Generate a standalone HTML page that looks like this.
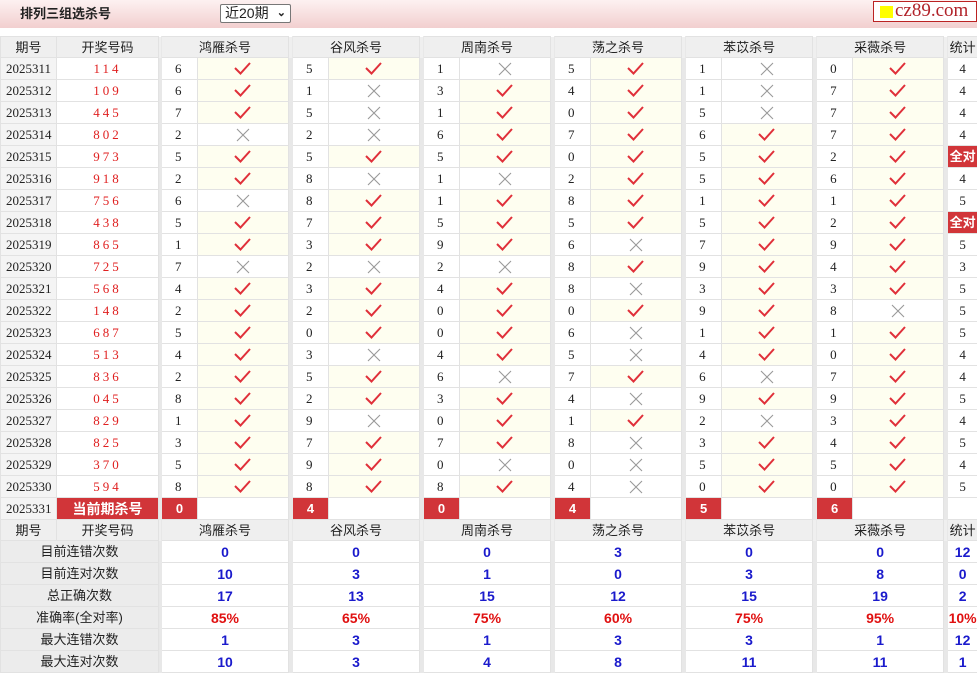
<!DOCTYPE html>
<html><head><meta charset="utf-8"><style>
*{margin:0;padding:0;box-sizing:border-box}
body{width:977px;height:671px;overflow:hidden;background:#fff;font-family:"Liberation Serif","Noto Serif CJK SC",serif;font-size:13px;color:#222;position:relative}
.top{position:absolute;left:0;top:0;width:977px;height:28px;background:linear-gradient(#fdf1f1,#f2cfcf)}
.title{position:absolute;left:20px;top:3px;font:bold 13px "Liberation Sans","Noto Sans CJK SC",sans-serif;color:#222}
.sel{position:absolute;left:220px;top:4px;width:71px;height:19px;border:1px solid #777;border-radius:2px;background:#fff;font:14px "Liberation Sans","Noto Sans CJK SC",sans-serif;padding-left:4px;line-height:16px}
.sel b{position:absolute;right:4px;top:0;font-size:11px}
.logo{position:absolute;left:873px;top:1px;width:104px;height:21px;border:1px solid #b22;background:#fff;font:19px "Liberation Serif",serif;color:#b1232a;line-height:18px;padding-left:21px;overflow:hidden;white-space:nowrap}
.logo i{position:absolute;left:6px;top:4px;width:13px;height:12px;background:#ff0}
table{position:absolute;left:0;top:36px;border-collapse:collapse;table-layout:fixed;width:977px}
td{height:22px;line-height:20px;border:1px solid #e2e2e2;text-align:center;padding:0;white-space:nowrap;overflow:hidden}
tr.h td{background:#efefef;font-family:"Liberation Sans","Noto Sans CJK SC",sans-serif;font-size:13px;height:21px;line-height:19px}
td.s{background:#e8e8e8;border-top:none;border-bottom:none;border-color:#e8e8e8}
td.p{text-align:left;padding-left:5px;background:#f4f4f4}
td.d{color:#e02020;letter-spacing:3px}
td.n{text-align:left;padding-left:13px}
td.c{background:#fefef0}
svg{display:block;margin:0 auto}
td.r,td.q{background:#d13539;color:#fff;font:bold 13px "Liberation Sans","Noto Sans CJK SC",sans-serif;line-height:20px}
td.lb{background:#ececec;font-family:"Liberation Sans","Noto Sans CJK SC",sans-serif;font-size:13px}
td.v{color:#1a1acc;font:bold 14px "Liberation Sans",sans-serif;line-height:20px}
td.v.red{color:#e01010}
</style></head><body>
<svg width="0" height="0" style="position:absolute"><defs>
<g id="k"><path d="M1 7 L6.5 12.5 L16 2" fill="none" stroke="#e0303a" stroke-width="2"/></g>
<g id="x"><path d="M3 2 L15 14 M15 2 L3 14" fill="none" stroke="#999" stroke-width="1.1"/></g>
</defs></svg>
<div class="top"></div>
<div class="title">排列三组选杀号</div>
<div class="sel">近20期<b>&#8964;</b></div>
<div class="logo"><i></i>cz89.com</div>
<table>
<colgroup><col style="width:56px"><col style="width:102px"><col style="width:3px">
<col style="width:36px"><col style="width:91px"><col style="width:4px">
<col style="width:36px"><col style="width:91px"><col style="width:4px">
<col style="width:36px"><col style="width:91px"><col style="width:4px">
<col style="width:36px"><col style="width:91px"><col style="width:4px">
<col style="width:36px"><col style="width:91px"><col style="width:4px">
<col style="width:36px"><col style="width:91px"><col style="width:4px">
<col style="width:30px"></colgroup>
<tr class="h"><td>期号</td><td>开奖号码</td><td class="s"></td><td colspan="2">鸿雁杀号</td><td class="s"></td><td colspan="2">谷风杀号</td><td class="s"></td><td colspan="2">周南杀号</td><td class="s"></td><td colspan="2">荡之杀号</td><td class="s"></td><td colspan="2">苯苡杀号</td><td class="s"></td><td colspan="2">采薇杀号</td><td class="s"></td><td>统计</td></tr>
<tr><td class="p">2025311</td><td class="d">114</td><td class="s"></td><td class="n">6</td><td class="c"><svg width="18" height="15"><use href="#k"/></svg></td><td class="s"></td><td class="n">5</td><td class="c"><svg width="18" height="15"><use href="#k"/></svg></td><td class="s"></td><td class="n">1</td><td><svg width="18" height="15"><use href="#x"/></svg></td><td class="s"></td><td class="n">5</td><td class="c"><svg width="18" height="15"><use href="#k"/></svg></td><td class="s"></td><td class="n">1</td><td><svg width="18" height="15"><use href="#x"/></svg></td><td class="s"></td><td class="n">0</td><td class="c"><svg width="18" height="15"><use href="#k"/></svg></td><td class="s"></td><td>4</td></tr>
<tr><td class="p">2025312</td><td class="d">109</td><td class="s"></td><td class="n">6</td><td class="c"><svg width="18" height="15"><use href="#k"/></svg></td><td class="s"></td><td class="n">1</td><td><svg width="18" height="15"><use href="#x"/></svg></td><td class="s"></td><td class="n">3</td><td class="c"><svg width="18" height="15"><use href="#k"/></svg></td><td class="s"></td><td class="n">4</td><td class="c"><svg width="18" height="15"><use href="#k"/></svg></td><td class="s"></td><td class="n">1</td><td><svg width="18" height="15"><use href="#x"/></svg></td><td class="s"></td><td class="n">7</td><td class="c"><svg width="18" height="15"><use href="#k"/></svg></td><td class="s"></td><td>4</td></tr>
<tr><td class="p">2025313</td><td class="d">445</td><td class="s"></td><td class="n">7</td><td class="c"><svg width="18" height="15"><use href="#k"/></svg></td><td class="s"></td><td class="n">5</td><td><svg width="18" height="15"><use href="#x"/></svg></td><td class="s"></td><td class="n">1</td><td class="c"><svg width="18" height="15"><use href="#k"/></svg></td><td class="s"></td><td class="n">0</td><td class="c"><svg width="18" height="15"><use href="#k"/></svg></td><td class="s"></td><td class="n">5</td><td><svg width="18" height="15"><use href="#x"/></svg></td><td class="s"></td><td class="n">7</td><td class="c"><svg width="18" height="15"><use href="#k"/></svg></td><td class="s"></td><td>4</td></tr>
<tr><td class="p">2025314</td><td class="d">802</td><td class="s"></td><td class="n">2</td><td><svg width="18" height="15"><use href="#x"/></svg></td><td class="s"></td><td class="n">2</td><td><svg width="18" height="15"><use href="#x"/></svg></td><td class="s"></td><td class="n">6</td><td class="c"><svg width="18" height="15"><use href="#k"/></svg></td><td class="s"></td><td class="n">7</td><td class="c"><svg width="18" height="15"><use href="#k"/></svg></td><td class="s"></td><td class="n">6</td><td class="c"><svg width="18" height="15"><use href="#k"/></svg></td><td class="s"></td><td class="n">7</td><td class="c"><svg width="18" height="15"><use href="#k"/></svg></td><td class="s"></td><td>4</td></tr>
<tr><td class="p">2025315</td><td class="d">973</td><td class="s"></td><td class="n">5</td><td class="c"><svg width="18" height="15"><use href="#k"/></svg></td><td class="s"></td><td class="n">5</td><td class="c"><svg width="18" height="15"><use href="#k"/></svg></td><td class="s"></td><td class="n">5</td><td class="c"><svg width="18" height="15"><use href="#k"/></svg></td><td class="s"></td><td class="n">0</td><td class="c"><svg width="18" height="15"><use href="#k"/></svg></td><td class="s"></td><td class="n">5</td><td class="c"><svg width="18" height="15"><use href="#k"/></svg></td><td class="s"></td><td class="n">2</td><td class="c"><svg width="18" height="15"><use href="#k"/></svg></td><td class="s"></td><td class="q">全对</td></tr>
<tr><td class="p">2025316</td><td class="d">918</td><td class="s"></td><td class="n">2</td><td class="c"><svg width="18" height="15"><use href="#k"/></svg></td><td class="s"></td><td class="n">8</td><td><svg width="18" height="15"><use href="#x"/></svg></td><td class="s"></td><td class="n">1</td><td><svg width="18" height="15"><use href="#x"/></svg></td><td class="s"></td><td class="n">2</td><td class="c"><svg width="18" height="15"><use href="#k"/></svg></td><td class="s"></td><td class="n">5</td><td class="c"><svg width="18" height="15"><use href="#k"/></svg></td><td class="s"></td><td class="n">6</td><td class="c"><svg width="18" height="15"><use href="#k"/></svg></td><td class="s"></td><td>4</td></tr>
<tr><td class="p">2025317</td><td class="d">756</td><td class="s"></td><td class="n">6</td><td><svg width="18" height="15"><use href="#x"/></svg></td><td class="s"></td><td class="n">8</td><td class="c"><svg width="18" height="15"><use href="#k"/></svg></td><td class="s"></td><td class="n">1</td><td class="c"><svg width="18" height="15"><use href="#k"/></svg></td><td class="s"></td><td class="n">8</td><td class="c"><svg width="18" height="15"><use href="#k"/></svg></td><td class="s"></td><td class="n">1</td><td class="c"><svg width="18" height="15"><use href="#k"/></svg></td><td class="s"></td><td class="n">1</td><td class="c"><svg width="18" height="15"><use href="#k"/></svg></td><td class="s"></td><td>5</td></tr>
<tr><td class="p">2025318</td><td class="d">438</td><td class="s"></td><td class="n">5</td><td class="c"><svg width="18" height="15"><use href="#k"/></svg></td><td class="s"></td><td class="n">7</td><td class="c"><svg width="18" height="15"><use href="#k"/></svg></td><td class="s"></td><td class="n">5</td><td class="c"><svg width="18" height="15"><use href="#k"/></svg></td><td class="s"></td><td class="n">5</td><td class="c"><svg width="18" height="15"><use href="#k"/></svg></td><td class="s"></td><td class="n">5</td><td class="c"><svg width="18" height="15"><use href="#k"/></svg></td><td class="s"></td><td class="n">2</td><td class="c"><svg width="18" height="15"><use href="#k"/></svg></td><td class="s"></td><td class="q">全对</td></tr>
<tr><td class="p">2025319</td><td class="d">865</td><td class="s"></td><td class="n">1</td><td class="c"><svg width="18" height="15"><use href="#k"/></svg></td><td class="s"></td><td class="n">3</td><td class="c"><svg width="18" height="15"><use href="#k"/></svg></td><td class="s"></td><td class="n">9</td><td class="c"><svg width="18" height="15"><use href="#k"/></svg></td><td class="s"></td><td class="n">6</td><td><svg width="18" height="15"><use href="#x"/></svg></td><td class="s"></td><td class="n">7</td><td class="c"><svg width="18" height="15"><use href="#k"/></svg></td><td class="s"></td><td class="n">9</td><td class="c"><svg width="18" height="15"><use href="#k"/></svg></td><td class="s"></td><td>5</td></tr>
<tr><td class="p">2025320</td><td class="d">725</td><td class="s"></td><td class="n">7</td><td><svg width="18" height="15"><use href="#x"/></svg></td><td class="s"></td><td class="n">2</td><td><svg width="18" height="15"><use href="#x"/></svg></td><td class="s"></td><td class="n">2</td><td><svg width="18" height="15"><use href="#x"/></svg></td><td class="s"></td><td class="n">8</td><td class="c"><svg width="18" height="15"><use href="#k"/></svg></td><td class="s"></td><td class="n">9</td><td class="c"><svg width="18" height="15"><use href="#k"/></svg></td><td class="s"></td><td class="n">4</td><td class="c"><svg width="18" height="15"><use href="#k"/></svg></td><td class="s"></td><td>3</td></tr>
<tr><td class="p">2025321</td><td class="d">568</td><td class="s"></td><td class="n">4</td><td class="c"><svg width="18" height="15"><use href="#k"/></svg></td><td class="s"></td><td class="n">3</td><td class="c"><svg width="18" height="15"><use href="#k"/></svg></td><td class="s"></td><td class="n">4</td><td class="c"><svg width="18" height="15"><use href="#k"/></svg></td><td class="s"></td><td class="n">8</td><td><svg width="18" height="15"><use href="#x"/></svg></td><td class="s"></td><td class="n">3</td><td class="c"><svg width="18" height="15"><use href="#k"/></svg></td><td class="s"></td><td class="n">3</td><td class="c"><svg width="18" height="15"><use href="#k"/></svg></td><td class="s"></td><td>5</td></tr>
<tr><td class="p">2025322</td><td class="d">148</td><td class="s"></td><td class="n">2</td><td class="c"><svg width="18" height="15"><use href="#k"/></svg></td><td class="s"></td><td class="n">2</td><td class="c"><svg width="18" height="15"><use href="#k"/></svg></td><td class="s"></td><td class="n">0</td><td class="c"><svg width="18" height="15"><use href="#k"/></svg></td><td class="s"></td><td class="n">0</td><td class="c"><svg width="18" height="15"><use href="#k"/></svg></td><td class="s"></td><td class="n">9</td><td class="c"><svg width="18" height="15"><use href="#k"/></svg></td><td class="s"></td><td class="n">8</td><td><svg width="18" height="15"><use href="#x"/></svg></td><td class="s"></td><td>5</td></tr>
<tr><td class="p">2025323</td><td class="d">687</td><td class="s"></td><td class="n">5</td><td class="c"><svg width="18" height="15"><use href="#k"/></svg></td><td class="s"></td><td class="n">0</td><td class="c"><svg width="18" height="15"><use href="#k"/></svg></td><td class="s"></td><td class="n">0</td><td class="c"><svg width="18" height="15"><use href="#k"/></svg></td><td class="s"></td><td class="n">6</td><td><svg width="18" height="15"><use href="#x"/></svg></td><td class="s"></td><td class="n">1</td><td class="c"><svg width="18" height="15"><use href="#k"/></svg></td><td class="s"></td><td class="n">1</td><td class="c"><svg width="18" height="15"><use href="#k"/></svg></td><td class="s"></td><td>5</td></tr>
<tr><td class="p">2025324</td><td class="d">513</td><td class="s"></td><td class="n">4</td><td class="c"><svg width="18" height="15"><use href="#k"/></svg></td><td class="s"></td><td class="n">3</td><td><svg width="18" height="15"><use href="#x"/></svg></td><td class="s"></td><td class="n">4</td><td class="c"><svg width="18" height="15"><use href="#k"/></svg></td><td class="s"></td><td class="n">5</td><td><svg width="18" height="15"><use href="#x"/></svg></td><td class="s"></td><td class="n">4</td><td class="c"><svg width="18" height="15"><use href="#k"/></svg></td><td class="s"></td><td class="n">0</td><td class="c"><svg width="18" height="15"><use href="#k"/></svg></td><td class="s"></td><td>4</td></tr>
<tr><td class="p">2025325</td><td class="d">836</td><td class="s"></td><td class="n">2</td><td class="c"><svg width="18" height="15"><use href="#k"/></svg></td><td class="s"></td><td class="n">5</td><td class="c"><svg width="18" height="15"><use href="#k"/></svg></td><td class="s"></td><td class="n">6</td><td><svg width="18" height="15"><use href="#x"/></svg></td><td class="s"></td><td class="n">7</td><td class="c"><svg width="18" height="15"><use href="#k"/></svg></td><td class="s"></td><td class="n">6</td><td><svg width="18" height="15"><use href="#x"/></svg></td><td class="s"></td><td class="n">7</td><td class="c"><svg width="18" height="15"><use href="#k"/></svg></td><td class="s"></td><td>4</td></tr>
<tr><td class="p">2025326</td><td class="d">045</td><td class="s"></td><td class="n">8</td><td class="c"><svg width="18" height="15"><use href="#k"/></svg></td><td class="s"></td><td class="n">2</td><td class="c"><svg width="18" height="15"><use href="#k"/></svg></td><td class="s"></td><td class="n">3</td><td class="c"><svg width="18" height="15"><use href="#k"/></svg></td><td class="s"></td><td class="n">4</td><td><svg width="18" height="15"><use href="#x"/></svg></td><td class="s"></td><td class="n">9</td><td class="c"><svg width="18" height="15"><use href="#k"/></svg></td><td class="s"></td><td class="n">9</td><td class="c"><svg width="18" height="15"><use href="#k"/></svg></td><td class="s"></td><td>5</td></tr>
<tr><td class="p">2025327</td><td class="d">829</td><td class="s"></td><td class="n">1</td><td class="c"><svg width="18" height="15"><use href="#k"/></svg></td><td class="s"></td><td class="n">9</td><td><svg width="18" height="15"><use href="#x"/></svg></td><td class="s"></td><td class="n">0</td><td class="c"><svg width="18" height="15"><use href="#k"/></svg></td><td class="s"></td><td class="n">1</td><td class="c"><svg width="18" height="15"><use href="#k"/></svg></td><td class="s"></td><td class="n">2</td><td><svg width="18" height="15"><use href="#x"/></svg></td><td class="s"></td><td class="n">3</td><td class="c"><svg width="18" height="15"><use href="#k"/></svg></td><td class="s"></td><td>4</td></tr>
<tr><td class="p">2025328</td><td class="d">825</td><td class="s"></td><td class="n">3</td><td class="c"><svg width="18" height="15"><use href="#k"/></svg></td><td class="s"></td><td class="n">7</td><td class="c"><svg width="18" height="15"><use href="#k"/></svg></td><td class="s"></td><td class="n">7</td><td class="c"><svg width="18" height="15"><use href="#k"/></svg></td><td class="s"></td><td class="n">8</td><td><svg width="18" height="15"><use href="#x"/></svg></td><td class="s"></td><td class="n">3</td><td class="c"><svg width="18" height="15"><use href="#k"/></svg></td><td class="s"></td><td class="n">4</td><td class="c"><svg width="18" height="15"><use href="#k"/></svg></td><td class="s"></td><td>5</td></tr>
<tr><td class="p">2025329</td><td class="d">370</td><td class="s"></td><td class="n">5</td><td class="c"><svg width="18" height="15"><use href="#k"/></svg></td><td class="s"></td><td class="n">9</td><td class="c"><svg width="18" height="15"><use href="#k"/></svg></td><td class="s"></td><td class="n">0</td><td><svg width="18" height="15"><use href="#x"/></svg></td><td class="s"></td><td class="n">0</td><td><svg width="18" height="15"><use href="#x"/></svg></td><td class="s"></td><td class="n">5</td><td class="c"><svg width="18" height="15"><use href="#k"/></svg></td><td class="s"></td><td class="n">5</td><td class="c"><svg width="18" height="15"><use href="#k"/></svg></td><td class="s"></td><td>4</td></tr>
<tr><td class="p">2025330</td><td class="d">594</td><td class="s"></td><td class="n">8</td><td class="c"><svg width="18" height="15"><use href="#k"/></svg></td><td class="s"></td><td class="n">8</td><td class="c"><svg width="18" height="15"><use href="#k"/></svg></td><td class="s"></td><td class="n">8</td><td class="c"><svg width="18" height="15"><use href="#k"/></svg></td><td class="s"></td><td class="n">4</td><td><svg width="18" height="15"><use href="#x"/></svg></td><td class="s"></td><td class="n">0</td><td class="c"><svg width="18" height="15"><use href="#k"/></svg></td><td class="s"></td><td class="n">0</td><td class="c"><svg width="18" height="15"><use href="#k"/></svg></td><td class="s"></td><td>5</td></tr>
<tr><td class="p">2025331</td><td class="r" style="font-size:14px">当前期杀号</td><td class="s"></td><td class="r">0</td><td></td><td class="s"></td><td class="r">4</td><td></td><td class="s"></td><td class="r">0</td><td></td><td class="s"></td><td class="r">4</td><td></td><td class="s"></td><td class="r">5</td><td></td><td class="s"></td><td class="r">6</td><td></td><td class="s"></td><td></td></tr>
<tr class="h"><td>期号</td><td>开奖号码</td><td class="s"></td><td colspan="2">鸿雁杀号</td><td class="s"></td><td colspan="2">谷风杀号</td><td class="s"></td><td colspan="2">周南杀号</td><td class="s"></td><td colspan="2">荡之杀号</td><td class="s"></td><td colspan="2">苯苡杀号</td><td class="s"></td><td colspan="2">采薇杀号</td><td class="s"></td><td>统计</td></tr>
<tr><td colspan="2" class="lb">目前连错次数</td><td class="s"></td><td colspan="2" class="v">0</td><td class="s"></td><td colspan="2" class="v">0</td><td class="s"></td><td colspan="2" class="v">0</td><td class="s"></td><td colspan="2" class="v">3</td><td class="s"></td><td colspan="2" class="v">0</td><td class="s"></td><td colspan="2" class="v">0</td><td class="s"></td><td class="v">12</td></tr>
<tr><td colspan="2" class="lb">目前连对次数</td><td class="s"></td><td colspan="2" class="v">10</td><td class="s"></td><td colspan="2" class="v">3</td><td class="s"></td><td colspan="2" class="v">1</td><td class="s"></td><td colspan="2" class="v">0</td><td class="s"></td><td colspan="2" class="v">3</td><td class="s"></td><td colspan="2" class="v">8</td><td class="s"></td><td class="v">0</td></tr>
<tr><td colspan="2" class="lb">总正确次数</td><td class="s"></td><td colspan="2" class="v">17</td><td class="s"></td><td colspan="2" class="v">13</td><td class="s"></td><td colspan="2" class="v">15</td><td class="s"></td><td colspan="2" class="v">12</td><td class="s"></td><td colspan="2" class="v">15</td><td class="s"></td><td colspan="2" class="v">19</td><td class="s"></td><td class="v">2</td></tr>
<tr><td colspan="2" class="lb">准确率(全对率)</td><td class="s"></td><td colspan="2" class="v red">85%</td><td class="s"></td><td colspan="2" class="v red">65%</td><td class="s"></td><td colspan="2" class="v red">75%</td><td class="s"></td><td colspan="2" class="v red">60%</td><td class="s"></td><td colspan="2" class="v red">75%</td><td class="s"></td><td colspan="2" class="v red">95%</td><td class="s"></td><td class="v red">10%</td></tr>
<tr><td colspan="2" class="lb">最大连错次数</td><td class="s"></td><td colspan="2" class="v">1</td><td class="s"></td><td colspan="2" class="v">3</td><td class="s"></td><td colspan="2" class="v">1</td><td class="s"></td><td colspan="2" class="v">3</td><td class="s"></td><td colspan="2" class="v">3</td><td class="s"></td><td colspan="2" class="v">1</td><td class="s"></td><td class="v">12</td></tr>
<tr><td colspan="2" class="lb">最大连对次数</td><td class="s"></td><td colspan="2" class="v">10</td><td class="s"></td><td colspan="2" class="v">3</td><td class="s"></td><td colspan="2" class="v">4</td><td class="s"></td><td colspan="2" class="v">8</td><td class="s"></td><td colspan="2" class="v">11</td><td class="s"></td><td colspan="2" class="v">11</td><td class="s"></td><td class="v">1</td></tr>
</table>
</body></html>
